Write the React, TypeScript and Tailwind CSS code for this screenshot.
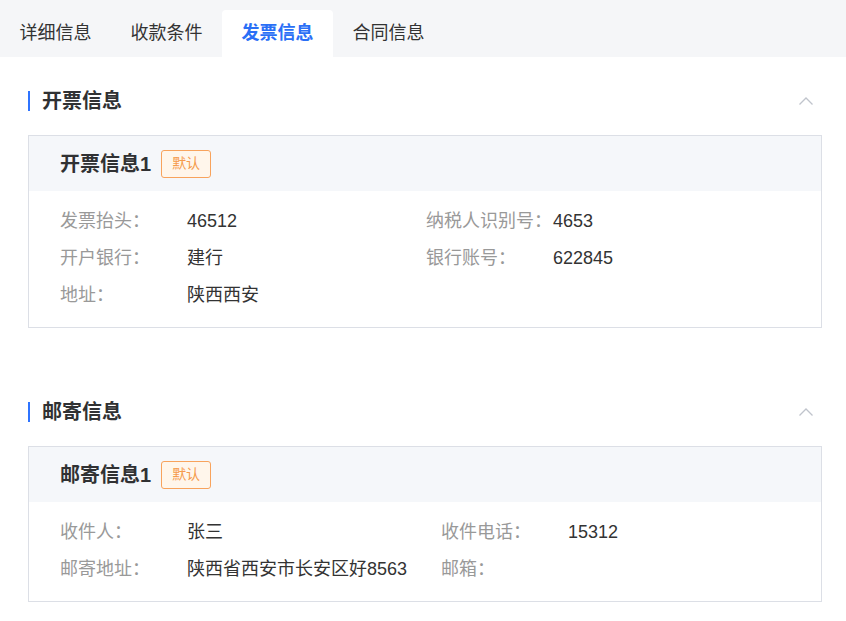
import React from "react";

const FONT = {
  fontFamily: '"Liberation Sans", "Noto Sans CJK SC", sans-serif',
};

function Chevron() {
  return (
    <svg width="16" height="10" viewBox="0 0 16 10" fill="none">
      <path d="M1.5 8.5 L8 2 L14.5 8.5" stroke="#c0c4cc" strokeWidth="1.3" />
    </svg>
  );
}

type Item = { label: string; value: string };

function Card({
  title,
  rows,
  cols,
}: {
  title: string;
  rows: Item[][];
  cols: string;
}) {
  return (
    <div className="border border-[#dcdfe6]">
      <div className="h-[55px] bg-[#f5f7fa] flex items-center pl-[31px]">
        <span className="text-[20px] font-bold text-[#303133]">{title}</span>
        <span className="ml-[10px] h-[28px] px-[10px] flex items-center border border-[#f8a35c] bg-[#fff6eb] text-[#f59a4c] text-[14px] rounded-[3px]">
          默认
        </span>
      </div>
      <div className="pl-[31px] pr-[32px] pt-[12px] pb-[13px]">
        {rows.map((r, i) => (
          <div key={i} className={`grid ${cols} h-[37px] items-center text-[18px]`}>
            {r.map((it, j) => (
              <div key={j} className="flex items-center">
                <span className="w-[127px] shrink-0 text-[#999999] whitespace-nowrap">{it.label}</span>
                <span className="text-[#333333] whitespace-nowrap">{it.value}</span>
              </div>
            ))}
          </div>
        ))}
      </div>
    </div>
  );
}

function Section({ title, children }: { title: string; children: React.ReactNode }) {
  return (
    <div>
      <div className="h-[40px] flex items-center justify-between">
        <div className="flex items-center">
          <div className="w-[2px] h-[20px] bg-[#2f74ff]" />
          <span className="ml-[12px] text-[20px] font-bold text-[#303133]">{title}</span>
        </div>
        <div className="mr-[8px] flex items-center">
          <Chevron />
        </div>
      </div>
      <div className="mt-[14px]">{children}</div>
    </div>
  );
}

export default function App() {
  const tabs = ["详细信息", "收款条件", "发票信息", "合同信息"];
  return (
    <div className="w-[846px] h-[621px] bg-white overflow-hidden" style={FONT}>
      <div className="h-[57px] bg-[#f5f6f8] flex items-end">
        {tabs.map((t, i) => (
          <div
            key={t}
            className={
              i === 2
                ? "w-[111px] h-[47px] flex items-center justify-center bg-white rounded-t-[4px] text-[18px] font-bold text-[#2a6ff6]"
                : "w-[111px] h-[47px] flex items-center justify-center text-[18px] text-[#333333]"
            }
          >
            {t}
          </div>
        ))}
      </div>
      <div className="pl-[28px] pr-[24px] pt-[24px]">
        <Section title="开票信息">
          <Card
            title="开票信息1"
            cols="grid-cols-[366px_1fr]"
            rows={[
              [
                { label: "发票抬头：", value: "46512" },
                { label: "纳税人识别号：", value: "4653" },
              ],
              [
                { label: "开户银行：", value: "建行" },
                { label: "银行账号：", value: "622845" },
              ],
              [{ label: "地址：", value: "陕西西安" }],
            ]}
          />
        </Section>
        <div className="h-[64px]" />
        <Section title="邮寄信息">
          <Card
            title="邮寄信息1"
            cols="grid-cols-[381px_1fr]"
            rows={[
              [
                { label: "收件人：", value: "张三" },
                { label: "收件电话：", value: "15312" },
              ],
              [
                { label: "邮寄地址：", value: "陕西省西安市长安区好8563" },
                { label: "邮箱：", value: "" },
              ],
            ]}
          />
        </Section>
      </div>
    </div>
  );
}
